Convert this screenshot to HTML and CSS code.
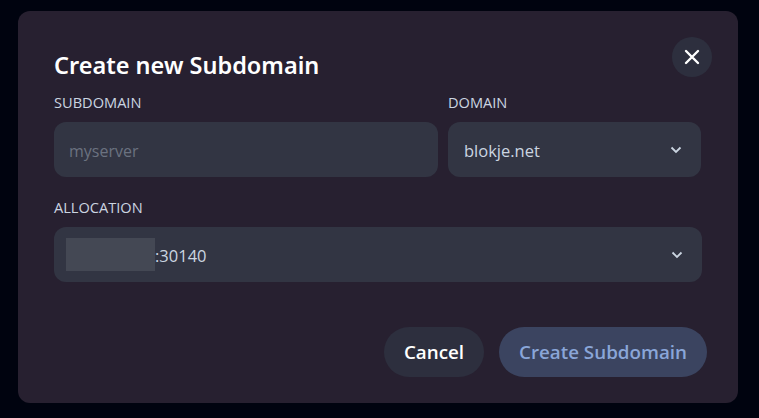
FILE: index.html

```html
<!DOCTYPE html>
<html lang="en">
<head>
    <meta charset="UTF-8">
    <title>Create new Subdomain</title>
    <link rel="stylesheet" href="styles.css">
</head>
<body>
    <div class="modal">
        <button type="button" class="close" aria-label="Close">
            <svg width="20" height="20" viewBox="0 0 20 20"><path d="M4 4L16 16M16 4L4 16" stroke="#fff" stroke-width="2.4" stroke-linecap="round"/></svg>
        </button>
        <h2>Create new Subdomain</h2>
        <div class="row">
            <div class="field sub">
                <label>SUBDOMAIN</label>
                <div class="control placeholder"><span class="text">myserver</span></div>
            </div>
            <div class="field domain">
                <label>DOMAIN</label>
                <div class="control">
                    <span class="text">blokje.net</span>
                    <svg class="chev" width="12" height="8" viewBox="0 0 12 8"><path d="M1.5 1.5L6 6L10.5 1.5" fill="none" stroke="#cbd5e1" stroke-width="1.8"/></svg>
                </div>
            </div>
        </div>
        <div class="field alloc">
            <label>ALLOCATION</label>
            <div class="control alloc-control">
                <span class="value"><span class="blur"></span><span class="text">:30140</span></span>
                <svg class="chev" width="12" height="8" viewBox="0 0 12 8"><path d="M1.5 1.5L6 6L10.5 1.5" fill="none" stroke="#cbd5e1" stroke-width="1.8"/></svg>
            </div>
        </div>
        <div class="actions">
            <button type="button" class="btn cancel">Cancel</button>
            <button type="button" class="btn create">Create Subdomain</button>
        </div>
    </div>
</body>
</html>
```

FILE: styles.css

```css
body {
    margin: 0;
    height: 418px;
    overflow: hidden;
    background-color: #00030f;
    font-family: "Open Sans", "Noto Sans", sans-serif;
}
.modal {
    position: relative;
    box-sizing: border-box;
    width: 720px;
    height: 392px;
    margin: 11px 0 0 18px;
    padding: 36px 36px 0 36px;
    background-color: #272030;
    border-radius: 12px;
}
.close {
    position: absolute;
    top: 26px;
    right: 26px;
    width: 40px;
    height: 40px;
    padding: 0;
    border: none;
    border-radius: 50%;
    background-color: #2d2f3e;
    display: flex;
    align-items: center;
    justify-content: center;
}
h2 {
    margin: 0 0 10px 0;
    height: 36px;
    line-height: 36px;
    font-family: "Noto Sans", sans-serif;
    font-size: 23.5px;
    font-weight: 600;
    color: #fff;
}
.row {
    display: flex;
    gap: 10px;
}
.sub {
    width: 384px;
}
.domain {
    width: 253px;
}
.alloc {
    width: 648px;
    margin-top: 21px;
}
label {
    display: block;
    height: 19px;
    line-height: 19px;
    margin-bottom: 10px;
    font-size: 14.6px;
    color: #cbd5e1;
}
.control {
    box-sizing: border-box;
    height: 55px;
    padding: 0 15px;
    display: flex;
    align-items: center;
    justify-content: space-between;
    background-color: #323543;
    border-radius: 12px;
    font-size: 16.5px;
    color: #cbd5e1;
}
.text {
    padding: 2px 0 0 1px;
}
.placeholder {
    font-size: 16px;
    color: #6b7280;
}
.placeholder .text {
    padding-left: 0;
}
.chev {
    margin-right: 4px;
}
.alloc-control {
    padding-left: 12px;
}
.value {
    display: flex;
    align-items: center;
}
.value .text {
    padding-left: 0;
}
.blur {
    display: block;
    width: 89px;
    height: 33px;
    background-color: #444854;
}
.actions {
    display: flex;
    justify-content: flex-end;
    gap: 15px;
    margin: 45px -5px 0 0;
}
.btn {
    height: 50px;
    border: none;
    border-radius: 25px;
    padding: 0;
    font-family: inherit;
    font-size: 18.8px;
    font-weight: 600;
}
.cancel {
    width: 100px;
    background-color: #2d2f3e;
    color: #fff;
}
.create {
    width: 208px;
    background-color: #3b4460;
    color: #8aa6d8;
}
```
